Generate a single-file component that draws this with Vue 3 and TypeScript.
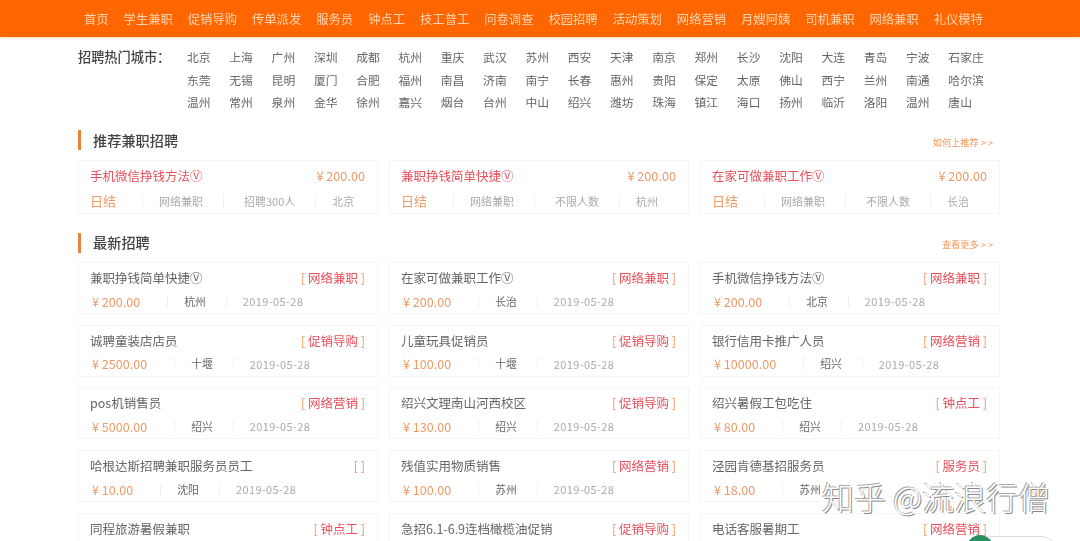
<script setup lang="ts">
// job board page
interface RecJob {
  title: string;
  price: string;
  count: string;
  city: string;
}
interface NewJob {
  title: string;
  tag: string;
  price?: string;
  city?: string;
  date?: string;
}

const day = "2019-05-28";

const navList = ["首页", "学生兼职", "促销导购", "传单派发", "服务员", "钟点工", "技工普工", "问卷调查", "校园招聘", "活动策划", "网络营销", "月嫂阿姨", "司机兼职", "网络兼职", "礼仪模特"];

const cityRows = [
  ["北京", "上海", "广州", "深圳", "成都", "杭州", "重庆", "武汉", "苏州", "西安", "天津", "南京", "郑州", "长沙", "沈阳", "大连", "青岛", "宁波", "石家庄"],
  ["东莞", "无锡", "昆明", "厦门", "合肥", "福州", "南昌", "济南", "南宁", "长春", "惠州", "贵阳", "保定", "太原", "佛山", "西宁", "兰州", "南通", "哈尔滨"],
  ["温州", "常州", "泉州", "金华", "徐州", "嘉兴", "烟台", "台州", "中山", "绍兴", "潍坊", "珠海", "镇江", "海口", "扬州", "临沂", "洛阳", "温州", "唐山"],
];

const recList: RecJob[] = [
  { title: "手机微信挣钱方法Ⓥ", price: "200.00", count: "招聘300人", city: "北京" },
  { title: "兼职挣钱简单快捷Ⓥ", price: "200.00", count: "不限人数", city: "杭州" },
  { title: "在家可做兼职工作Ⓥ", price: "200.00", count: "不限人数", city: "长治" },
];

// last row runs off the bottom of the window, only the titles show
const newList: NewJob[] = [
  { title: "兼职挣钱简单快捷Ⓥ", tag: "网络兼职", price: "200.00", city: "杭州", date: day },
  { title: "在家可做兼职工作Ⓥ", tag: "网络兼职", price: "200.00", city: "长治", date: day },
  { title: "手机微信挣钱方法Ⓥ", tag: "网络兼职", price: "200.00", city: "北京", date: day },
  { title: "诚聘童装店店员", tag: "促销导购", price: "2500.00", city: "十堰", date: day },
  { title: "儿童玩具促销员", tag: "促销导购", price: "100.00", city: "十堰", date: day },
  { title: "银行信用卡推广人员", tag: "网络营销", price: "10000.00", city: "绍兴", date: day },
  { title: "pos机销售员", tag: "网络营销", price: "5000.00", city: "绍兴", date: day },
  { title: "绍兴文理南山河西校区", tag: "促销导购", price: "130.00", city: "绍兴", date: day },
  { title: "绍兴暑假工包吃住", tag: "钟点工", price: "80.00", city: "绍兴", date: day },
  { title: "哈根达斯招聘兼职服务员员工", tag: "", price: "10.00", city: "沈阳", date: day },
  { title: "残值实用物质销售", tag: "网络营销", price: "100.00", city: "苏州", date: day },
  { title: "泾园肯德基招服务员", tag: "服务员", price: "18.00", city: "苏州" },
  { title: "同程旅游暑假兼职", tag: "钟点工" },
  { title: "急招6.1-6.9连档橄榄油促销", tag: "促销导购" },
  { title: "电话客服暑期工", tag: "网络营销" },
];
</script>

<template>
  <div class="page">
    <!-- top nav -->
    <header class="nav">
      <a v-for="n in navList" :key="n">{{ n }}</a>
    </header>

    <main class="wrap">
      <!-- cities -->
      <section class="cities">
        <div class="cities-label">招聘热门城市：</div>
        <div class="cities-list">
          <div v-for="(row, i) in cityRows" :key="i" class="city-row">
            <span v-for="c in row" :key="c">{{ c }}</span>
          </div>
        </div>
      </section>

      <!-- recommended -->
      <div class="sec-head first">
        <h2>推荐兼职招聘</h2>
        <a>如何上推荐 &gt; &gt;</a>
      </div>
      <div class="grid">
        <div v-for="job in recList" :key="job.title" class="card rec">
          <div class="line">
            <span class="rec-title">{{ job.title }}</span>
            <span class="rec-price">¥ {{ job.price }}</span>
          </div>
          <div class="rec-meta">
            <span class="settle">日结</span>
            <span>网络兼职</span>
            <span class="count">{{ job.count }}</span>
            <span>{{ job.city }}</span>
          </div>
        </div>
      </div>

      <!-- latest -->
      <div class="sec-head second">
        <h2>最新招聘</h2>
        <a>查看更多 &gt; &gt;</a>
      </div>
      <div class="grid new-grid">
        <div v-for="(job, i) in newList" :key="i" class="card item">
          <div class="line">
            <span class="item-title">{{ job.title }}</span>
            <span class="tag">[ <em>{{ job.tag }}</em> ]</span>
          </div>
          <div v-if="job.price" class="item-meta">
            <span class="price">¥ {{ job.price }}</span>
            <span class="city">{{ job.city }}</span>
            <span v-if="job.date" class="date">{{ job.date }}</span>
          </div>
        </div>
      </div>
    </main>

    <!-- watermark -->
    <div class="mark">知乎 @流浪行僧</div>
    <div class="pill"></div>
    <div class="wechat"></div>
  </div>
</template>

<style>
html,
body {
  margin: 0;
  background: #fff;
  overflow: hidden;
}
</style>

<style scoped>
.page {
  position: relative;
  width: 1080px;
  height: 541px;
  overflow: hidden;
  font-family: "Noto Sans CJK SC", "Liberation Sans", sans-serif;
  color: #666;
}
.nav {
  display: flex;
  gap: 15px;
  height: 37px;
  padding-left: 84px;
  align-items: center;
  background: #ff6600;
  box-shadow: 0 1px 2px #ffd9b8;
  filter: blur(0.35px);
}
.nav a {
  font-size: 12.3px;
  color: #ffd5b0;
}
.wrap {
  padding: 0 80px 0 78px;
  filter: blur(0.35px);
}
.cities {
  display: flex;
  padding-top: 9px;
}
.cities-label {
  width: 109px;
  font-size: 13.2px;
  font-weight: 500;
  line-height: 22px;
  color: #444;
  white-space: nowrap;
}
.city-row {
  display: flex;
  height: 22.5px;
  line-height: 22px;
  font-size: 11.8px;
  color: #666;
}
.city-row span {
  width: 42.3px;
  white-space: nowrap;
}
.sec-head {
  display: flex;
  justify-content: space-between;
  align-items: center;
  height: 20px;
  margin-top: 19px;
  margin-bottom: 9px;
  padding-left: 12px;
  padding-right: 7px;
  border-left: 3px solid #e8833a;
}
.sec-head.first {
  margin-top: 16.5px;
  margin-bottom: 10px;
}
.sec-head h2 {
  margin: 0;
  font-size: 14.2px;
  font-weight: 500;
  color: #444;
}
.sec-head.second h2 {
  margin-top: -2px;
}
.sec-head a {
  padding-top: 3px;
  font-size: 9.2px;
  color: #f09a5a;
}
.sec-head.second a {
  padding-top: 1px;
}
.grid {
  display: grid;
  grid-template-columns: repeat(3, 300px);
  column-gap: 11px;
}
.new-grid {
  row-gap: 10.7px;
}
.card {
  box-sizing: border-box;
  border: 1px solid #f7f5f3;
  padding: 0 12px 0 11px;
}
.line {
  display: flex;
  justify-content: space-between;
  align-items: center;
  white-space: nowrap;
}
.rec {
  height: 54px;
  padding-top: 5px;
}
.rec-title {
  font-size: 12.5px;
  color: #e8505b;
}
.rec-price {
  font-size: 12.7px;
  color: #ee9a66;
}
.rec-meta {
  display: flex;
  align-items: center;
  margin-top: 9px;
  font-size: 11px;
  color: #aaa;
  white-space: nowrap;
}
.rec-meta span {
  padding: 0 20px 0 16px;
  border-right: 1px solid #f1f1f1;
  line-height: 14px;
}
.rec-meta .count {
  padding-left: 20px;
}
.rec-meta .settle {
  padding-left: 0;
  padding-right: 26px;
  font-size: 13px;
  color: #ee9a66;
}
.rec-meta span:last-child {
  border-right: none;
}
.item {
  height: 52px;
  padding-top: 5px;
}
.item-title {
  font-size: 12.5px;
  color: #666;
}
.tag {
  font-size: 12.5px;
  color: #ee9a66;
}
.tag em {
  font-style: normal;
  color: #e8505b;
}
.item-meta {
  display: flex;
  align-items: center;
  height: 16px;
  margin-top: 6px;
  padding-left: 2px;
  font-size: 12.6px;
}
.price {
  padding-right: 27px;
  color: #ee9a66;
  border-right: 1px solid #f1f1f1;
  line-height: 13px;
}
.city {
  padding: 0 20px 0 16px;
  font-size: 10.8px;
  color: #666;
  border-right: 1px solid #f1f1f1;
  line-height: 13px;
}
.date {
  padding-left: 16px;
  font-size: 11px;
  color: #aaa;
  letter-spacing: 0.4px;
}
.mark {
  position: absolute;
  left: 822px;
  top: 480px;
  font-size: 32px;
  line-height: 32px;
  font-weight: 300;
  white-space: nowrap;
  color: #fff;
  text-shadow: -1px -1px 0 #aaa, 1px 1px 0 #888;
}
.pill {
  position: absolute;
  left: 975px;
  top: 536px;
  width: 80px;
  height: 30px;
  border: 1px solid #ddd;
  border-radius: 15px;
  background: #fff;
}
.wechat {
  position: absolute;
  left: 967px;
  top: 535px;
  width: 26px;
  height: 26px;
  border-radius: 50%;
  background: #2a8f5f;
}
</style>
